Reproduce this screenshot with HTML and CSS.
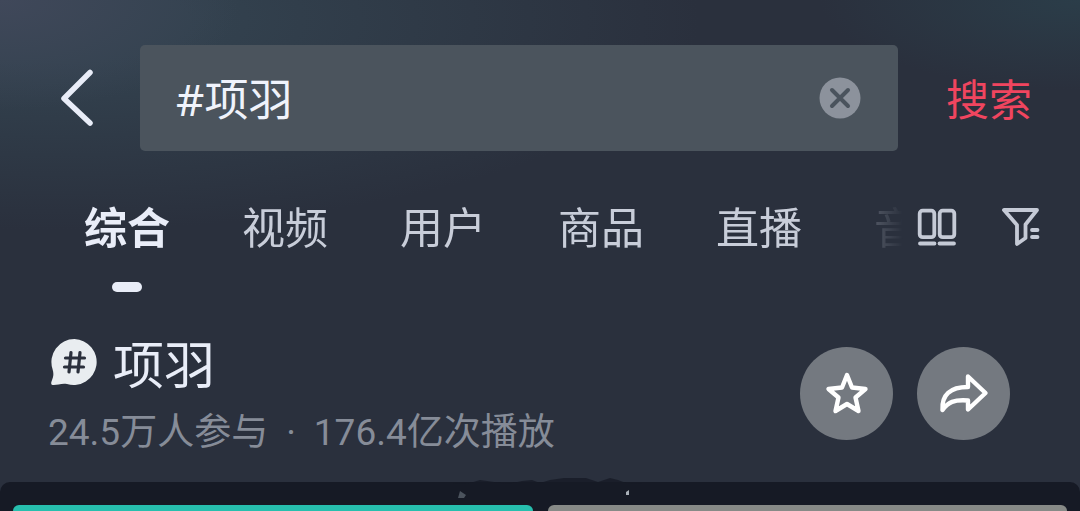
FILE: index.html
```html
<!DOCTYPE html>
<html lang="zh-CN">
<head>
    <meta charset="UTF-8">
    <meta name="viewport" content="width=device-width, initial-scale=1.0">
    <title>#项羽 - 搜索</title>
    <link rel="stylesheet" href="styles.css">
</head>
<body>
<form class="search">
    <button class="icon-btn" type="button" aria-label="返回">
        <svg width="34" height="58" viewBox="0 0 34 58" fill="none" stroke="#e9edf8" stroke-width="5.5" stroke-linecap="round" stroke-linejoin="round">
            <path d="M30 3.5L4 29.5L30 54"/>
        </svg>
    </button>
    <div class="search-box">
        <input class="search-input" type="text" value="#项羽" aria-label="搜索内容">
        <button class="icon-btn" type="button" aria-label="清空">
            <svg width="42" height="42" viewBox="0 0 42 42" fill="none">
                <circle cx="21" cy="21" r="20.5" fill="#8c929c"/>
                <path d="M13 13L29 29M29 13L13 29" stroke="#4a535d" stroke-width="4" stroke-linecap="round"/>
            </svg>
        </button>
    </div>
    <button class="search-submit" type="submit">搜索</button>
</form>

<div class="filter">
    <nav class="tabs">
        <a class="tab active" href="#all">综合</a>
        <a class="tab" href="#video">视频</a>
        <a class="tab" href="#user">用户</a>
        <a class="tab" href="#goods">商品</a>
        <a class="tab" href="#live">直播</a>
        <a class="tab" href="#music">音乐</a>
    </nav>
    <div class="tools">
        <button class="icon-btn" type="button" aria-label="双列显示">
            <svg width="40" height="38" viewBox="0 0 40 38" fill="none" stroke="#c5cad6" stroke-width="3.8" stroke-linecap="round">
                <rect x="2.7" y="2.7" width="14.6" height="26.5" rx="3"/>
                <rect x="22.7" y="2.7" width="14.6" height="26.5" rx="3"/>
                <path d="M3 35.5H17.5M22.5 35.5H37"/>
            </svg>
        </button>
        <button class="icon-btn" type="button" aria-label="筛选">
            <svg width="40" height="40" viewBox="0 0 40 40" fill="none" stroke="#c5cad6" stroke-width="3.8" stroke-linecap="round" stroke-linejoin="round">
                <path d="M3 3H36L24.5 17.5V31L16 37V18Z"/>
                <path d="M31 23H36.5M31 30H36.5"/>
            </svg>
        </button>
    </div>
</div>

<section class="topic">
    <div class="topic-info">
        <h1 class="topic-title">
            <svg width="48" height="48" viewBox="0 0 48 48" fill="none" aria-hidden="true">
                <path d="M24.5 1A23 23 0 1 1 17 46C11 45 7 47.5 2.5 47Q0.5 46.5 1.5 43.5C3.5 38.5 4 36 2.5 31A23 23 0 0 1 24.5 1Z" fill="#e9edf0"/>
                <path d="M21 14.5L19 34M30 14.5L28 34M15.5 20H34.5M14.5 29H33.5" stroke="#2b303c" stroke-width="3.2" stroke-linecap="round"/>
            </svg>
            项羽
        </h1>
        <p class="topic-stats">
            <span>24.5万人参与</span>
            <span>·</span>
            <span>176.4亿次播放</span>
        </p>
    </div>
    <div class="topic-actions">
        <button class="round-btn" type="button" aria-label="收藏">
            <svg width="44" height="44" viewBox="0 0 44 44" fill="none" stroke="#fff" stroke-width="4.4" stroke-linejoin="round">
                <path d="M22 4L27 16.5L40.5 18L30.5 26.5L33.5 40L22 33L10.5 40L13.5 26.5L3.5 18L17 16.5Z"/>
            </svg>
        </button>
        <button class="round-btn" type="button" aria-label="分享">
            <svg width="50" height="42" viewBox="0 0 50 42" fill="none" stroke="#fff" stroke-width="4.4" stroke-linejoin="round">
                <path d="M29 4.5L46.5 21L29 37.5V28.5C15 27.5 9 30 3.5 38C2.5 23 11 15 29 15Z"/>
            </svg>
        </button>
    </div>
</section>

<main class="results">
    <svg class="skyline" width="190" height="30" viewBox="0 0 190 30" aria-hidden="true">
        <path d="M0 10L18 9L28 6L42 8L56 10L70 7L80 6L88 9L98 6L112 4L134 4L146 8L158 4L166 6L174 9L190 10V16H0Z" fill="#161a25" opacity="0.8"/>
        <path d="M8 17L14 21L12 24H6Z" fill="#4b535d"/>
        <path d="M174 18L177 16V21H174Z" fill="#a9b0b8"/>
    </svg>
    <div class="card card-teal"></div>
    <div class="card card-gray"></div>
</main>
</body>
</html>
```

FILE: styles.css
```css
* {
    box-sizing: border-box;
}
body {
    display: flex;
    flex-direction: column;
    min-height: 100vh;
    margin: 0;
    font-family: "Noto Sans CJK SC", sans-serif;
    color: #e9edf8;
    background-color: #2a303d;
    background-image:
        radial-gradient(ellipse 240px 110px at 0 0, #40485a, transparent),
        radial-gradient(ellipse 640px 210px at 60px 20px, #33424f 20%, transparent),
        radial-gradient(ellipse 260px 90px at 100% 0, #2b3d49, transparent);
}
button {
    padding: 0;
    border: 0;
    background: none;
    font-family: inherit;
    cursor: pointer;
}
svg {
    display: block;
}
.search {
    display: flex;
    align-items: center;
    padding: 45px 48px 0 60px;
}
.search-box {
    display: flex;
    flex: 1;
    align-items: center;
    height: 106px;
    margin: 0 48px 0 46px;
    padding: 0 37px 0 36px;
    border-radius: 5px;
    background-color: #4b545d;
}
.search-input {
    flex: 1;
    min-width: 0;
    height: 64px;
    padding: 0 0 2px;
    border: 0;
    outline: 0;
    background: none;
    font-family: "Noto Sans", "Noto Sans CJK SC", sans-serif;
    font-size: 44px;
    color: #f0f3fb;
}
.search-submit {
    padding-bottom: 2px;
    font-size: 43px;
    line-height: 60px;
    color: #f0455f;
}
.filter {
    display: flex;
    align-items: flex-start;
    padding: 44px 39px 0 84px;
}
.tabs {
    display: flex;
    flex: 1;
    gap: 72px;
    min-width: 0;
    overflow: hidden;
    -webkit-mask-image: linear-gradient(to left, transparent, rgba(0, 0, 0, 0.25) 30px, #000 100px);
    mask-image: linear-gradient(to left, transparent, rgba(0, 0, 0, 0.25) 30px, #000 100px);
}
.tab {
    flex: none;
    font-size: 43px;
    line-height: 60px;
    color: #c8cdd9;
    text-decoration: none;
}
.tab.active {
    font-weight: bold;
    color: #e9edf8;
}
.tab.active::after {
    content: "";
    display: block;
    width: 30px;
    height: 10px;
    margin: 27px auto 0;
    border-radius: 5px;
    background-color: #e9edf8;
}
.tools {
    display: flex;
    align-items: center;
    gap: 44px;
    height: 64px;
    margin-left: 14px;
}
.topic {
    display: flex;
    align-items: center;
    justify-content: space-between;
    padding: 34px 70px 22px 48px;
}
.topic-title {
    display: flex;
    align-items: center;
    gap: 15px;
    margin: 0;
    padding-left: 2px;
    font-size: 51px;
    font-weight: normal;
    line-height: 72px;
}
.topic-stats {
    display: flex;
    gap: 18px;
    margin: 0;
    padding-top: 8px;
    font-family: Roboto, "Noto Sans CJK SC", sans-serif;
    font-size: 37px;
    line-height: 54px;
    color: #868c98;
}
.topic-actions {
    display: flex;
    gap: 24px;
}
.round-btn {
    display: flex;
    align-items: center;
    justify-content: center;
    width: 93px;
    height: 93px;
    border-radius: 50%;
    background-color: #747980;
}
.results {
    position: relative;
    display: grid;
    flex: 1;
    grid-template-columns: 1fr 1fr;
    gap: 15px;
    padding: 23px 13px 0;
    border-radius: 10px 10px 0 0;
    background-color: #161a25;
}
.skyline {
    position: absolute;
    top: -8px;
    left: 452px;
}
.card {
    border-radius: 8px 8px 0 0;
}
.card-teal {
    background-color: #27bfae;
}
.card-gray {
    background-color: #878a87;
}
```
